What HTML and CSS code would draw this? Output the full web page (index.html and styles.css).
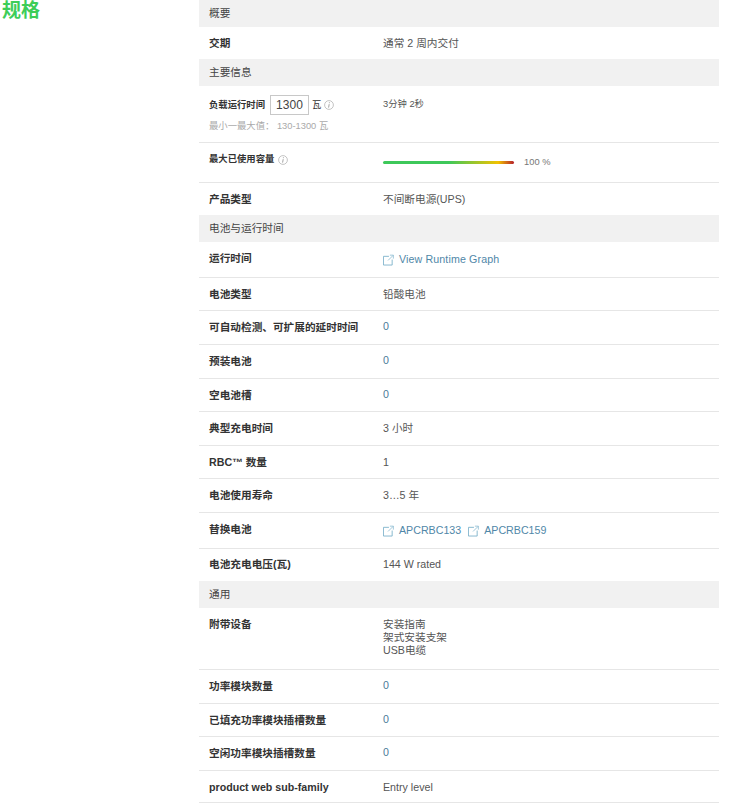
FILE: index.html
```html
<!DOCTYPE html>
<html lang="zh">
<head>
<meta charset="utf-8">
<title>规格</title>
<link rel="stylesheet" href="styles.css">
</head>
<body>
<svg class="defs" width="0" height="0"><defs>
<symbol id="ext" viewBox="0 0 12 12"><path d="M6.5 2H.5v9.5H10V5.5" fill="none" stroke="#7fb3cc"/><path d="M5.5 6.5 11 1M7.5 .7H11.3V4.5" fill="none" stroke="#7fb3cc" stroke-width=".8"/></symbol>
<symbol id="info" viewBox="0 0 10 10"><circle cx="5" cy="5" r="4.4" fill="none" stroke="#b5b5b5" stroke-width=".8"/><path d="M5.4 2.3v.9M5.2 4.2 4.6 7.6" fill="none" stroke="#999" stroke-width=".9"/></symbol>
</defs></svg>
<div class="page">
  <aside class="side"><h2 class="title">规格</h2></aside>
  <main class="specs">
    <div class="band">概要</div>
    <div class="row h32 plain"><div class="key">交期</div><div class="val">通常 2 周内交付</div></div>
    <div class="band">主要信息</div>
    <div class="row calc">
      <div class="key small">
        <div class="load"><span>负载运行时间</span><span class="input">1300</span><span class="unit">瓦</span><svg class="i tight"><use href="#info"/></svg></div>
        <div class="hint">最小一最大值： 130-1300 瓦</div>
      </div>
      <div class="val small time">3分钟 2秒</div>
    </div>
    <div class="row cap">
      <div class="key small capkey">最大已使用容量<svg class="i"><use href="#info"/></svg></div>
      <div class="val barcell"><span class="bar"></span><span class="pct">100 %</span></div>
    </div>
    <div class="row h32 plain"><div class="key">产品类型</div><div class="val">不间断电源(UPS)</div></div>
    <div class="band">电池与运行时间</div>
    <div class="row h36"><div class="key">运行时间</div><div class="val linked"><a class="link wide"><svg class="e"><use href="#ext"/></svg>View Runtime Graph</a></div></div>
    <div class="row h33"><div class="key">电池类型</div><div class="val">铅酸电池</div></div>
    <div class="row"><div class="key">可自动检测、可扩展的延时时间</div><div class="val num">0</div></div>
    <div class="row"><div class="key">预装电池</div><div class="val num">0</div></div>
    <div class="row"><div class="key">空电池槽</div><div class="val num">0</div></div>
    <div class="row"><div class="key">典型充电时间</div><div class="val">3 小时</div></div>
    <div class="row"><div class="key">RBC™ 数量</div><div class="val">1</div></div>
    <div class="row"><div class="key">电池使用寿命</div><div class="val">3…5 年</div></div>
    <div class="row h36"><div class="key">替换电池</div><div class="val linked"><a class="link"><svg class="e"><use href="#ext"/></svg>APCRBC133</a><a class="link"><svg class="e"><use href="#ext"/></svg>APCRBC159</a></div></div>
    <div class="row h32 plain lift"><div class="key">电池充电电压(瓦)</div><div class="val">144 W rated</div></div>
    <div class="band">通用</div>
    <div class="row tall"><div class="key">附带设备</div><div class="val">安装指南<br>架式安装支架<br>USB电缆</div></div>
    <div class="row"><div class="key">功率模块数量</div><div class="val num">0</div></div>
    <div class="row"><div class="key">已填充功率模块插槽数量</div><div class="val num">0</div></div>
    <div class="row"><div class="key">空闲功率模块插槽数量</div><div class="val num">0</div></div>
    <div class="row h32"><div class="key">product web sub-family</div><div class="val">Entry level</div></div>
  </main>
</div>
</body>
</html>
```
FILE: styles.css
```css
* { box-sizing: border-box; }
html, body { margin: 0; background: #fff; }
body {
  font-family: "Liberation Sans", "Noto Sans CJK SC", sans-serif;
  font-size: 10.67px;
  line-height: 13px;
  color: #333;
}
.defs { display: block; height: 0; }
.page { display: flex; width: 733px; height: 805px; overflow: hidden; }
.side { width: 199px; flex: none; padding-left: 2px; }
.title {
  margin: 0;
  font-size: 19px;
  line-height: 22px;
  font-weight: 700;
  color: #3dcd58;
}
.specs { width: 520px; flex: none; }
.band {
  height: 27px;
  padding: 7px 0 0 10px;
  background: #f1f1f1;
  color: #444;
}
.row {
  display: flex;
  height: 33.6px;
  padding-top: 10px;
  border-bottom: 1px solid #e6e6e6;
}
.row.h32 { height: 32px; }
.row.h33 { height: 33.45px; }
.row.h36 { height: 36px; }
.row.plain { border-bottom: 0; }
.row.lift { padding-top: 9px; }
.key { width: 184px; flex: none; padding-left: 10px; font-weight: 700; white-space: nowrap; color: #333; }
.val { flex: 1; color: #555; white-space: nowrap; }
.num { color: #4b7a99; margin-top: -1px; }
.linked { margin-top: 1px; }
.small { font-size: 9.33px; }
.row.calc { height: 57px; padding-top: 9px; }
.load { display: flex; align-items: center; gap: 5px; height: 20px; }
.input {
  width: 39px;
  height: 20px;
  border: 1px solid #c8c8c8;
  font-size: 12px;
  font-weight: 400;
  line-height: 18px;
  text-align: center;
  color: #444;
}
.unit { font-weight: 400; margin-left: -2px; }
.i { width: 10px; height: 10px; flex: none; }
.i.tight { margin-left: -2px; }
.hint { margin-top: 5px; font-weight: 400; color: #aaa; }
.time { padding-top: 3px; }
.row.cap { height: 40px; padding-top: 10px; }
.capkey { display: flex; align-items: center; gap: 4px; height: 13px; }
.barcell { display: flex; align-items: center; height: 19px; }
.bar {
  width: 131px;
  height: 3px;
  border-radius: 2px;
  background: linear-gradient(90deg, #3dc85a 0%, #3dc85a 50%, #f2c200 88%, #b5202a 100%);
}
.pct { margin-left: 10px; font-size: 9.33px; color: #777; }
.link { display: inline-flex; align-items: center; color: #4f87a8; margin-right: 7px; }
.link.wide { letter-spacing: .12px; }
.e { width: 11px; height: 12px; margin-right: 5px; }
.row.tall { height: 62.2px; padding-top: 10px; }
```
